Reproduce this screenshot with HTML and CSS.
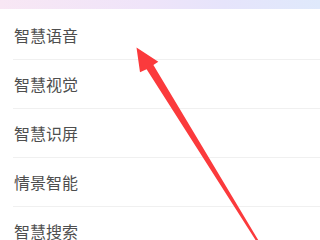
FILE: index.html
```html
<!DOCTYPE html>
<html lang="zh-CN">
<head>
<meta charset="utf-8">
<link rel="stylesheet" href="styles.css">
</head>
<body>
<div class="page">
  <div class="topbar"></div>
  <ul class="list">
    <li class="row">智慧语音</li>
    <li class="row">智慧视觉</li>
    <li class="row">智慧识屏</li>
    <li class="row">情景智能</li>
    <li class="row">智慧搜索</li>
  </ul>
  <svg class="arrow" width="320" height="240" viewBox="0 0 320 240">
    <polygon points="136.5,47.5 158.3,61.7 153.4,65 258.8,241 256.8,242 146.6,69.2 140,72.2" fill="#fb3a3c"/>
  </svg>
</div>
</body>
</html>
```
FILE: styles.css
```css
html, body {
  margin: 0;
  padding: 0;
  background: #ffffff;
}
.page {
  position: relative;
  width: 320px;
  height: 240px;
  overflow: hidden;
  background: #ffffff;
}
.topbar {
  height: 9px;
  background: linear-gradient(90deg, #f8e7f4 0%, #efe4f9 45%, #e6e4fb 70%, #dfe9fb 100%);
}
.list {
  list-style: none;
  margin: 0;
  padding: 2px 0 0 0;
}
.row {
  height: 48px;
  margin-left: 13px;
  padding-left: 1px;
  border-bottom: 1px solid #f0f0f0;
  display: flex;
  align-items: center;
  font-family: "Noto Sans CJK SC", "Noto Sans", sans-serif;
  font-size: 16px;
  color: #4e4e4e;
}
.arrow {
  position: absolute;
  left: 0;
  top: 0;
}
```
